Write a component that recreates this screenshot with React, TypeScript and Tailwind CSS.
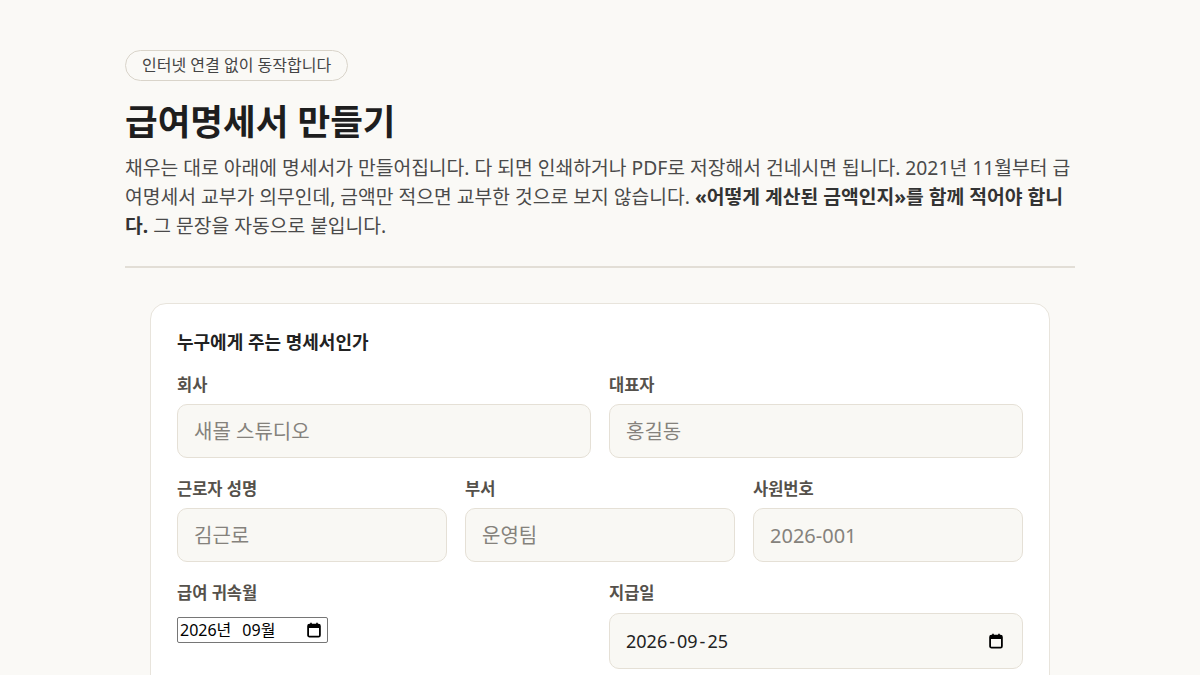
const FONT = "font-['Noto_Sans','Noto_Sans_CJK_KR',sans-serif]";

function Field({
  label,
  placeholder,
}: {
  label: string;
  placeholder: string;
}) {
  return (
    <div className="flex flex-col">
      <label className="mb-2 text-[16.5px] font-bold leading-[22px] text-[#55514b]">
        {label}
      </label>
      <input
        type="text"
        placeholder={placeholder}
        className="h-[54px] w-full rounded-[10px] border border-[#e5e0d6] bg-[#f9f8f4] px-4 text-[20px] text-[#222] placeholder:text-[#85827c] outline-none"
      />
    </div>
  );
}

function CalendarIcon() {
  return (
    <svg width="14" height="16" viewBox="0 0 14 16" className="text-black">
      <path d="M4 0.8v2.4M10 0.8v2.4" stroke="currentColor" strokeWidth="1.6" />
      <rect
        x="1.1"
        y="2.6"
        width="11.8"
        height="12"
        rx="1.4"
        fill="none"
        stroke="currentColor"
        strokeWidth="1.8"
      />
      <rect x="1.1" y="2.6" width="11.8" height="3.4" fill="currentColor" />
    </svg>
  );
}

export default function App() {
  return (
    <div className={`min-h-screen bg-[#faf9f6] ${FONT}`}>
      <div className="mx-auto w-[950px] pt-[50px]">
        {/* Header */}
        <span className="inline-block rounded-full border border-[#d9d4ca] px-4 py-[4px] text-[16px] leading-[21px] text-[#444]">
          인터넷 연결 없이 동작합니다
        </span>
        <h1 className="mt-[18px] text-[35.5px] font-bold leading-[44px] text-[#1e1e1e]">
          급여명세서 만들기
        </h1>
        <p className="mt-[10px] text-[19.3px] leading-[29px] text-[#4a4a4a]">
          채우는 대로 아래에 명세서가 만들어집니다. 다 되면 인쇄하거나 PDF로
          저장해서 건네시면 됩니다. 2021년 11월부터 급여명세서 교부가
          의무인데, 금액만 적으면 교부한 것으로 보지 않습니다.{" "}
          <strong className="font-bold text-[#333]">
            «어떻게 계산된 금액인지»를 함께 적어야 합니다.
          </strong>{" "}
          그 문장을 자동으로 붙입니다.
        </p>
        <div className="mt-[26px] h-[2px] bg-[#e2ded6]" />

        {/* Form card */}
        <div className="mx-auto mt-[35px] w-[900px] rounded-[16px] border border-[#e8e4dc] bg-white p-[26px]">
          <h2 className="text-[18px] font-bold leading-[24px] text-[#222]">
            누구에게 주는 명세서인가
          </h2>

          <div className="mt-[20px] grid grid-cols-2 gap-x-[18px]">
            <Field label="회사" placeholder="새몰 스튜디오" />
            <Field label="대표자" placeholder="홍길동" />
          </div>

          <div className="mt-[20px] grid grid-cols-3 gap-x-[18px]">
            <Field label="근로자 성명" placeholder="김근로" />
            <Field label="부서" placeholder="운영팀" />
            <Field label="사원번호" placeholder="2026-001" />
          </div>

          <div className="mt-[20px] grid grid-cols-2 gap-x-[18px]">
            <div className="flex flex-col items-start">
              <label className="mb-2 text-[16.5px] font-bold leading-[22px] text-[#55514b]">
                급여 귀속월
              </label>
              {/* month picker, drawn as the browser shows it */}
              <div className="mt-[5px] flex h-[26px] w-[151px] items-center justify-between rounded-[2px] border border-[#767676] bg-white pl-[2px] pr-[6px] text-[16px] text-black">
                <span className="flex items-center">
                  <span>2026년</span>
                  <span className="ml-[11px]">09월</span>
                </span>
                <CalendarIcon />
              </div>
            </div>
            <div className="flex flex-col">
              <label className="mb-2 text-[16.5px] font-bold leading-[22px] text-[#55514b]">
                지급일
              </label>
              <div className="mt-[1px] flex h-[56px] w-full items-center justify-between rounded-[10px] border border-[#e5e0d6] bg-[#f9f8f4] pl-4 pr-[19px] text-[18px] text-[#222]">
                <span className="flex items-center">
                  <span>2026</span>
                  <span className="mx-[2px]">-</span>
                  <span>09</span>
                  <span className="mx-[2px]">-</span>
                  <span>25</span>
                </span>
                <CalendarIcon />
              </div>
            </div>
          </div>

          <p className="mt-[3px] text-[15px] leading-[22px] text-[#77736c]">
            귀속월은 일한 달, 지급일은 실제로 급여가 나간 날입니다. 둘이 다르면
            명세서에 모두 적힙니다.
          </p>
        </div>
      </div>
    </div>
  );
}
